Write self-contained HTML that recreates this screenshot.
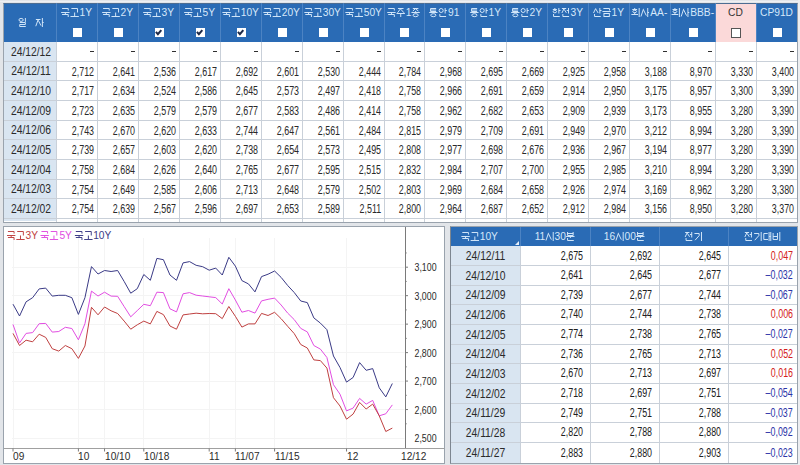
<!DOCTYPE html><html><head><meta charset="utf-8"><style>
*{margin:0;padding:0;box-sizing:border-box}
html,body{width:800px;height:465px;overflow:hidden;background:#e2e5e9;font-family:"Liberation Sans",sans-serif;}
.a{position:absolute}
.t{position:absolute;white-space:nowrap;font-size:10px;line-height:12px;color:#2a2a2a}
.d{font-size:12px;transform:scaleX(0.86);transform-origin:50% 50%}
.n{font-size:12px;transform:scaleX(0.74);transform-origin:100% 50%}
.h{position:absolute;white-space:nowrap;font-size:11px;line-height:12px;color:#d6e8fa;text-align:center;transform:scaleX(0.93);transform-origin:50% 50%}
.cb{position:absolute;width:9px;height:9px;background:#fff}

</style></head><body>
<div class="a" style="left:0;top:1px;width:800px;height:1px;background:#eef0f3"></div>
<div class="a" style="left:3px;top:3px;width:795px;height:220px;background:#fff;border:1px solid #9aa3ad;border-top-color:#4d6d92"></div>
<div class="a" style="left:4px;top:4px;width:793px;height:37.5px;background:#2a6bb5"></div>
<div class="a" style="left:715px;top:4px;width:41px;height:37.5px;background:#fbd9d9"></div>
<div class="a" style="left:4px;top:41.5px;width:52px;height:179.8px;background:#d9e5f1"></div>
<div class="a" style="left:56px;top:3px;width:1px;height:38.5px;background:#4c83c3"></div>
<div class="a" style="left:97px;top:3px;width:1px;height:38.5px;background:#4c83c3"></div>
<div class="a" style="left:138px;top:3px;width:1px;height:38.5px;background:#4c83c3"></div>
<div class="a" style="left:179px;top:3px;width:1px;height:38.5px;background:#4c83c3"></div>
<div class="a" style="left:220px;top:3px;width:1px;height:38.5px;background:#4c83c3"></div>
<div class="a" style="left:261px;top:3px;width:1px;height:38.5px;background:#4c83c3"></div>
<div class="a" style="left:302px;top:3px;width:1px;height:38.5px;background:#4c83c3"></div>
<div class="a" style="left:343px;top:3px;width:1px;height:38.5px;background:#4c83c3"></div>
<div class="a" style="left:384px;top:3px;width:1px;height:38.5px;background:#4c83c3"></div>
<div class="a" style="left:424px;top:3px;width:1px;height:38.5px;background:#4c83c3"></div>
<div class="a" style="left:465px;top:3px;width:1px;height:38.5px;background:#4c83c3"></div>
<div class="a" style="left:506px;top:3px;width:1px;height:38.5px;background:#4c83c3"></div>
<div class="a" style="left:547px;top:3px;width:1px;height:38.5px;background:#4c83c3"></div>
<div class="a" style="left:588px;top:3px;width:1px;height:38.5px;background:#4c83c3"></div>
<div class="a" style="left:629px;top:3px;width:1px;height:38.5px;background:#4c83c3"></div>
<div class="a" style="left:670px;top:3px;width:1px;height:38.5px;background:#4c83c3"></div>
<div class="a" style="left:715px;top:3px;width:1px;height:38.5px;background:#4c83c3"></div>
<div class="a" style="left:756px;top:3px;width:1px;height:38.5px;background:#4c83c3"></div>
<div class="a" style="left:56px;top:41.5px;width:1px;height:180.8px;background:#c9d0d9"></div>
<div class="a" style="left:97px;top:41.5px;width:1px;height:180.8px;background:#c9d0d9"></div>
<div class="a" style="left:138px;top:41.5px;width:1px;height:180.8px;background:#c9d0d9"></div>
<div class="a" style="left:179px;top:41.5px;width:1px;height:180.8px;background:#c9d0d9"></div>
<div class="a" style="left:220px;top:41.5px;width:1px;height:180.8px;background:#c9d0d9"></div>
<div class="a" style="left:261px;top:41.5px;width:1px;height:180.8px;background:#c9d0d9"></div>
<div class="a" style="left:302px;top:41.5px;width:1px;height:180.8px;background:#c9d0d9"></div>
<div class="a" style="left:343px;top:41.5px;width:1px;height:180.8px;background:#c9d0d9"></div>
<div class="a" style="left:384px;top:41.5px;width:1px;height:180.8px;background:#c9d0d9"></div>
<div class="a" style="left:424px;top:41.5px;width:1px;height:180.8px;background:#c9d0d9"></div>
<div class="a" style="left:465px;top:41.5px;width:1px;height:180.8px;background:#c9d0d9"></div>
<div class="a" style="left:506px;top:41.5px;width:1px;height:180.8px;background:#c9d0d9"></div>
<div class="a" style="left:547px;top:41.5px;width:1px;height:180.8px;background:#c9d0d9"></div>
<div class="a" style="left:588px;top:41.5px;width:1px;height:180.8px;background:#c9d0d9"></div>
<div class="a" style="left:629px;top:41.5px;width:1px;height:180.8px;background:#c9d0d9"></div>
<div class="a" style="left:670px;top:41.5px;width:1px;height:180.8px;background:#c9d0d9"></div>
<div class="a" style="left:715px;top:41.5px;width:1px;height:180.8px;background:#c9d0d9"></div>
<div class="a" style="left:756px;top:41.5px;width:1px;height:180.8px;background:#c9d0d9"></div>
<div class="a" style="left:4px;top:61px;width:793px;height:1px;background:#c9d0d9"></div>
<div class="a" style="left:4px;top:80px;width:793px;height:1px;background:#c9d0d9"></div>
<div class="a" style="left:4px;top:100px;width:793px;height:1px;background:#c9d0d9"></div>
<div class="a" style="left:4px;top:120px;width:793px;height:1px;background:#c9d0d9"></div>
<div class="a" style="left:4px;top:139px;width:793px;height:1px;background:#c9d0d9"></div>
<div class="a" style="left:4px;top:159px;width:793px;height:1px;background:#c9d0d9"></div>
<div class="a" style="left:4px;top:179px;width:793px;height:1px;background:#c9d0d9"></div>
<div class="a" style="left:4px;top:198px;width:793px;height:1px;background:#c9d0d9"></div>
<div class="a" style="left:4px;top:218px;width:793px;height:1px;background:#c9d0d9"></div>
<div class="a" style="left:3px;top:222px;width:795px;height:1px;background:#9aa3ad"></div>
<div class="h" style="left:15px;top:17px;width:15px;font-size:10px"><svg width="10" height="9" viewBox="0 0 10 9" style="display:inline-block;vertical-align:-1px;overflow:visible"><g fill="none" stroke="currentColor" stroke-width="1.0"><ellipse cx="3" cy="1.9" rx="2.3" ry="1.5"/><path d="M7.6 0V3.9M1.5 4.5H7.6V6.5H1.5V8.5H8"/></g></svg></div>
<div class="h" style="left:31.5px;top:17px;width:15px;font-size:10px"><svg width="10" height="9" viewBox="0 0 10 9" style="display:inline-block;vertical-align:-1px;overflow:visible"><g fill="none" stroke="currentColor" stroke-width="1.0"><path d="M0.6 1.5H5.6M3.1 1.5L0.5 8.2M3.1 2.2L6.1 7.6M7.6 0V9M7.6 4.5H9"/></g></svg></div>
<div class="h" style="left:56px;top:6px;width:41px;color:#d6e8fa"><svg width="10" height="9" viewBox="0 0 10 9" style="display:inline-block;vertical-align:-1px;overflow:visible"><g fill="none" stroke="currentColor" stroke-width="1.0"><path d="M1 0.5H7.6V2.6M0 4.5H9M4.5 4.5V6M1 6.5H7.6V9"/></g></svg><svg width="10" height="9" viewBox="0 0 10 9" style="display:inline-block;vertical-align:-1px;overflow:visible"><g fill="none" stroke="currentColor" stroke-width="1.0"><path d="M1 0.5H7.6V4.5M4.5 4.5V8M0 8.5H9"/></g></svg>1Y</div>
<div class="cb" style="left:72.5px;top:28px"></div>
<div class="h" style="left:97px;top:6px;width:41px;color:#d6e8fa"><svg width="10" height="9" viewBox="0 0 10 9" style="display:inline-block;vertical-align:-1px;overflow:visible"><g fill="none" stroke="currentColor" stroke-width="1.0"><path d="M1 0.5H7.6V2.6M0 4.5H9M4.5 4.5V6M1 6.5H7.6V9"/></g></svg><svg width="10" height="9" viewBox="0 0 10 9" style="display:inline-block;vertical-align:-1px;overflow:visible"><g fill="none" stroke="currentColor" stroke-width="1.0"><path d="M1 0.5H7.6V4.5M4.5 4.5V8M0 8.5H9"/></g></svg>2Y</div>
<div class="cb" style="left:113.5px;top:28px"></div>
<div class="h" style="left:138px;top:6px;width:41px;color:#d6e8fa"><svg width="10" height="9" viewBox="0 0 10 9" style="display:inline-block;vertical-align:-1px;overflow:visible"><g fill="none" stroke="currentColor" stroke-width="1.0"><path d="M1 0.5H7.6V2.6M0 4.5H9M4.5 4.5V6M1 6.5H7.6V9"/></g></svg><svg width="10" height="9" viewBox="0 0 10 9" style="display:inline-block;vertical-align:-1px;overflow:visible"><g fill="none" stroke="currentColor" stroke-width="1.0"><path d="M1 0.5H7.6V4.5M4.5 4.5V8M0 8.5H9"/></g></svg>3Y</div>
<div class="cb" style="left:154.5px;top:28px"></div>
<svg class="a" style="left:154.0px;top:28px" width="10" height="10"><path d="M1.9 3.9 L3.9 6.2 L7.3 2.1" stroke="#1e2a48" stroke-width="2" fill="none"/></svg>
<div class="h" style="left:179px;top:6px;width:41px;color:#d6e8fa"><svg width="10" height="9" viewBox="0 0 10 9" style="display:inline-block;vertical-align:-1px;overflow:visible"><g fill="none" stroke="currentColor" stroke-width="1.0"><path d="M1 0.5H7.6V2.6M0 4.5H9M4.5 4.5V6M1 6.5H7.6V9"/></g></svg><svg width="10" height="9" viewBox="0 0 10 9" style="display:inline-block;vertical-align:-1px;overflow:visible"><g fill="none" stroke="currentColor" stroke-width="1.0"><path d="M1 0.5H7.6V4.5M4.5 4.5V8M0 8.5H9"/></g></svg>5Y</div>
<div class="cb" style="left:195.5px;top:28px"></div>
<svg class="a" style="left:195.0px;top:28px" width="10" height="10"><path d="M1.9 3.9 L3.9 6.2 L7.3 2.1" stroke="#1e2a48" stroke-width="2" fill="none"/></svg>
<div class="h" style="left:220px;top:6px;width:41px;color:#d6e8fa"><svg width="10" height="9" viewBox="0 0 10 9" style="display:inline-block;vertical-align:-1px;overflow:visible"><g fill="none" stroke="currentColor" stroke-width="1.0"><path d="M1 0.5H7.6V2.6M0 4.5H9M4.5 4.5V6M1 6.5H7.6V9"/></g></svg><svg width="10" height="9" viewBox="0 0 10 9" style="display:inline-block;vertical-align:-1px;overflow:visible"><g fill="none" stroke="currentColor" stroke-width="1.0"><path d="M1 0.5H7.6V4.5M4.5 4.5V8M0 8.5H9"/></g></svg>10Y</div>
<div class="cb" style="left:236.5px;top:28px"></div>
<svg class="a" style="left:236.0px;top:28px" width="10" height="10"><path d="M1.9 3.9 L3.9 6.2 L7.3 2.1" stroke="#1e2a48" stroke-width="2" fill="none"/></svg>
<div class="h" style="left:261px;top:6px;width:41px;color:#d6e8fa"><svg width="10" height="9" viewBox="0 0 10 9" style="display:inline-block;vertical-align:-1px;overflow:visible"><g fill="none" stroke="currentColor" stroke-width="1.0"><path d="M1 0.5H7.6V2.6M0 4.5H9M4.5 4.5V6M1 6.5H7.6V9"/></g></svg><svg width="10" height="9" viewBox="0 0 10 9" style="display:inline-block;vertical-align:-1px;overflow:visible"><g fill="none" stroke="currentColor" stroke-width="1.0"><path d="M1 0.5H7.6V4.5M4.5 4.5V8M0 8.5H9"/></g></svg>20Y</div>
<div class="cb" style="left:277.5px;top:28px"></div>
<div class="h" style="left:302px;top:6px;width:41px;color:#d6e8fa"><svg width="10" height="9" viewBox="0 0 10 9" style="display:inline-block;vertical-align:-1px;overflow:visible"><g fill="none" stroke="currentColor" stroke-width="1.0"><path d="M1 0.5H7.6V2.6M0 4.5H9M4.5 4.5V6M1 6.5H7.6V9"/></g></svg><svg width="10" height="9" viewBox="0 0 10 9" style="display:inline-block;vertical-align:-1px;overflow:visible"><g fill="none" stroke="currentColor" stroke-width="1.0"><path d="M1 0.5H7.6V4.5M4.5 4.5V8M0 8.5H9"/></g></svg>30Y</div>
<div class="cb" style="left:318.5px;top:28px"></div>
<div class="h" style="left:343px;top:6px;width:41px;color:#d6e8fa"><svg width="10" height="9" viewBox="0 0 10 9" style="display:inline-block;vertical-align:-1px;overflow:visible"><g fill="none" stroke="currentColor" stroke-width="1.0"><path d="M1 0.5H7.6V2.6M0 4.5H9M4.5 4.5V6M1 6.5H7.6V9"/></g></svg><svg width="10" height="9" viewBox="0 0 10 9" style="display:inline-block;vertical-align:-1px;overflow:visible"><g fill="none" stroke="currentColor" stroke-width="1.0"><path d="M1 0.5H7.6V4.5M4.5 4.5V8M0 8.5H9"/></g></svg>50Y</div>
<div class="cb" style="left:359.5px;top:28px"></div>
<div class="h" style="left:384px;top:6px;width:40px;color:#d6e8fa"><svg width="10" height="9" viewBox="0 0 10 9" style="display:inline-block;vertical-align:-1px;overflow:visible"><g fill="none" stroke="currentColor" stroke-width="1.0"><path d="M1 0.5H7.6V2.6M0 4.5H9M4.5 4.5V6M1 6.5H7.6V9"/></g></svg><svg width="10" height="9" viewBox="0 0 10 9" style="display:inline-block;vertical-align:-1px;overflow:visible"><g fill="none" stroke="currentColor" stroke-width="1.0"><path d="M1.5 0.5H7.5M4.5 0.5L1 4.8M4.5 1.2L8 4.8M0 5.5H9M4.5 5.5V9"/></g></svg>1<svg width="10" height="9" viewBox="0 0 10 9" style="display:inline-block;vertical-align:-1px;overflow:visible"><g fill="none" stroke="currentColor" stroke-width="1.0"><path d="M1.5 0.5H7.5M4.5 0.5L1.5 3M4.5 1L7.5 3M4.5 3V4.5M0 4.5H9"/><ellipse cx="4.5" cy="7.2" rx="2.8" ry="1.5"/></g></svg></div>
<div class="cb" style="left:400.0px;top:28px"></div>
<div class="h" style="left:424px;top:6px;width:41px;color:#d6e8fa"><svg width="10" height="9" viewBox="0 0 10 9" style="display:inline-block;vertical-align:-1px;overflow:visible"><g fill="none" stroke="currentColor" stroke-width="1.0"><path d="M7.5 0.5H1.5V3.5H7.5M1.5 2H7.5M4.5 3.5V4.5M0 4.5H9"/><ellipse cx="4.5" cy="7.2" rx="2.8" ry="1.5"/></g></svg><svg width="10" height="9" viewBox="0 0 10 9" style="display:inline-block;vertical-align:-1px;overflow:visible"><g fill="none" stroke="currentColor" stroke-width="1.0"><ellipse cx="2.9" cy="2.5" rx="2.2" ry="2"/><path d="M7.2 0V5.5M7.2 2.5H9M1.5 6V8.5H8.2"/></g></svg>91</div>
<div class="cb" style="left:440.5px;top:28px"></div>
<div class="h" style="left:465px;top:6px;width:41px;color:#d6e8fa"><svg width="10" height="9" viewBox="0 0 10 9" style="display:inline-block;vertical-align:-1px;overflow:visible"><g fill="none" stroke="currentColor" stroke-width="1.0"><path d="M7.5 0.5H1.5V3.5H7.5M1.5 2H7.5M4.5 3.5V4.5M0 4.5H9"/><ellipse cx="4.5" cy="7.2" rx="2.8" ry="1.5"/></g></svg><svg width="10" height="9" viewBox="0 0 10 9" style="display:inline-block;vertical-align:-1px;overflow:visible"><g fill="none" stroke="currentColor" stroke-width="1.0"><ellipse cx="2.9" cy="2.5" rx="2.2" ry="2"/><path d="M7.2 0V5.5M7.2 2.5H9M1.5 6V8.5H8.2"/></g></svg>1Y</div>
<div class="cb" style="left:481.5px;top:28px"></div>
<div class="h" style="left:506px;top:6px;width:41px;color:#d6e8fa"><svg width="10" height="9" viewBox="0 0 10 9" style="display:inline-block;vertical-align:-1px;overflow:visible"><g fill="none" stroke="currentColor" stroke-width="1.0"><path d="M7.5 0.5H1.5V3.5H7.5M1.5 2H7.5M4.5 3.5V4.5M0 4.5H9"/><ellipse cx="4.5" cy="7.2" rx="2.8" ry="1.5"/></g></svg><svg width="10" height="9" viewBox="0 0 10 9" style="display:inline-block;vertical-align:-1px;overflow:visible"><g fill="none" stroke="currentColor" stroke-width="1.0"><ellipse cx="2.9" cy="2.5" rx="2.2" ry="2"/><path d="M7.2 0V5.5M7.2 2.5H9M1.5 6V8.5H8.2"/></g></svg>2Y</div>
<div class="cb" style="left:522.5px;top:28px"></div>
<div class="h" style="left:547px;top:6px;width:41px;color:#d6e8fa"><svg width="10" height="9" viewBox="0 0 10 9" style="display:inline-block;vertical-align:-1px;overflow:visible"><g fill="none" stroke="currentColor" stroke-width="1.0"><path d="M2.9 0V1M0.7 1.5H5.1"/><ellipse cx="2.9" cy="3.6" rx="1.8" ry="1.2"/><path d="M7.2 0V5.5M7.2 2.5H9M1.5 6V8.5H8.2"/></g></svg><svg width="10" height="9" viewBox="0 0 10 9" style="display:inline-block;vertical-align:-1px;overflow:visible"><g fill="none" stroke="currentColor" stroke-width="1.0"><path d="M0.5 0.5H5.1M2.8 0.5L0.5 5M2.8 1.2L5.3 4.8M7.6 0V5.5M5.7 2.5H7.6M1.5 6V8.5H8.2"/></g></svg>3Y</div>
<div class="cb" style="left:563.5px;top:28px"></div>
<div class="h" style="left:588px;top:6px;width:41px;color:#d6e8fa"><svg width="10" height="9" viewBox="0 0 10 9" style="display:inline-block;vertical-align:-1px;overflow:visible"><g fill="none" stroke="currentColor" stroke-width="1.0"><path d="M2.8 0.3L0.4 5M2.8 1L5.4 5M7.2 0V5.5M7.2 2.5H9M1.5 6V8.5H8.2"/></g></svg><svg width="10" height="9" viewBox="0 0 10 9" style="display:inline-block;vertical-align:-1px;overflow:visible"><g fill="none" stroke="currentColor" stroke-width="1.0"><path d="M1 0.5H7.6V2.5M0 3.5H9"/><rect x="1.6" y="5.5" width="5.8" height="3"/></g></svg>1Y</div>
<div class="cb" style="left:604.5px;top:28px"></div>
<div class="h" style="left:629px;top:6px;width:41px;color:#d6e8fa"><svg width="10" height="9" viewBox="0 0 10 9" style="display:inline-block;vertical-align:-1px;overflow:visible"><g fill="none" stroke="currentColor" stroke-width="1.0"><path d="M3.6 0V1M1 1.5H6.2"/><ellipse cx="3.6" cy="3.5" rx="2" ry="1.2"/><path d="M3.6 4.7V6.5M0 6.5H7.2M8.4 0V9"/></g></svg><svg width="10" height="9" viewBox="0 0 10 9" style="display:inline-block;vertical-align:-1px;overflow:visible"><g fill="none" stroke="currentColor" stroke-width="1.0"><path d="M3.1 0.8L0.3 8.5M3.1 2L6.1 7.6M7.6 0V9M7.6 4.5H9"/></g></svg>AA-</div>
<div class="cb" style="left:645.5px;top:28px"></div>
<div class="h" style="left:670px;top:6px;width:45px;color:#d6e8fa"><svg width="10" height="9" viewBox="0 0 10 9" style="display:inline-block;vertical-align:-1px;overflow:visible"><g fill="none" stroke="currentColor" stroke-width="1.0"><path d="M3.6 0V1M1 1.5H6.2"/><ellipse cx="3.6" cy="3.5" rx="2" ry="1.2"/><path d="M3.6 4.7V6.5M0 6.5H7.2M8.4 0V9"/></g></svg><svg width="10" height="9" viewBox="0 0 10 9" style="display:inline-block;vertical-align:-1px;overflow:visible"><g fill="none" stroke="currentColor" stroke-width="1.0"><path d="M3.1 0.8L0.3 8.5M3.1 2L6.1 7.6M7.6 0V9M7.6 4.5H9"/></g></svg>BBB-</div>
<div class="cb" style="left:688.5px;top:28px"></div>
<div class="h" style="left:715px;top:6px;width:41px;color:#333">CD</div>
<div class="cb" style="left:731.0px;top:28px;width:10px;height:10px;border:1px solid #555"></div>
<div class="h" style="left:756px;top:6px;width:41px;color:#d6e8fa">CP91D</div>
<div class="cb" style="left:772.5px;top:28px"></div>
<div class="t d" style="left:5px;top:45.75px;width:52px;text-align:center">24/12/12</div>
<div class="a" style="left:90px;top:51px;width:4px;height:1.4px;background:#303030"></div>
<div class="a" style="left:131px;top:51px;width:4px;height:1.4px;background:#303030"></div>
<div class="a" style="left:172px;top:51px;width:4px;height:1.4px;background:#303030"></div>
<div class="a" style="left:213px;top:51px;width:4px;height:1.4px;background:#303030"></div>
<div class="a" style="left:254px;top:51px;width:4px;height:1.4px;background:#303030"></div>
<div class="a" style="left:295px;top:51px;width:4px;height:1.4px;background:#303030"></div>
<div class="a" style="left:336px;top:51px;width:4px;height:1.4px;background:#303030"></div>
<div class="a" style="left:377px;top:51px;width:4px;height:1.4px;background:#303030"></div>
<div class="a" style="left:417px;top:51px;width:4px;height:1.4px;background:#303030"></div>
<div class="a" style="left:458px;top:51px;width:4px;height:1.4px;background:#303030"></div>
<div class="a" style="left:499px;top:51px;width:4px;height:1.4px;background:#303030"></div>
<div class="a" style="left:540px;top:51px;width:4px;height:1.4px;background:#303030"></div>
<div class="a" style="left:581px;top:51px;width:4px;height:1.4px;background:#303030"></div>
<div class="a" style="left:622px;top:51px;width:4px;height:1.4px;background:#303030"></div>
<div class="a" style="left:663px;top:51px;width:4px;height:1.4px;background:#303030"></div>
<div class="a" style="left:708px;top:51px;width:4px;height:1.4px;background:#303030"></div>
<div class="a" style="left:749px;top:51px;width:4px;height:1.4px;background:#303030"></div>
<div class="a" style="left:790px;top:51px;width:4px;height:1.4px;background:#303030"></div>
<div class="t d" style="left:5px;top:65.0px;width:52px;text-align:center">24/12/11</div>
<div class="t n" style="right:706px;top:65.5px">2,712</div>
<div class="t n" style="right:665px;top:65.5px">2,641</div>
<div class="t n" style="right:624px;top:65.5px">2,536</div>
<div class="t n" style="right:583px;top:65.5px">2,617</div>
<div class="t n" style="right:542px;top:65.5px">2,692</div>
<div class="t n" style="right:501px;top:65.5px">2,601</div>
<div class="t n" style="right:460px;top:65.5px">2,530</div>
<div class="t n" style="right:419px;top:65.5px">2,444</div>
<div class="t n" style="right:379px;top:65.5px">2,784</div>
<div class="t n" style="right:338px;top:65.5px">2,968</div>
<div class="t n" style="right:297px;top:65.5px">2,695</div>
<div class="t n" style="right:256px;top:65.5px">2,669</div>
<div class="t n" style="right:215px;top:65.5px">2,925</div>
<div class="t n" style="right:174px;top:65.5px">2,958</div>
<div class="t n" style="right:133px;top:65.5px">3,188</div>
<div class="t n" style="right:88px;top:65.5px">8,970</div>
<div class="t n" style="right:47px;top:65.5px">3,330</div>
<div class="t n" style="right:6px;top:65.5px">3,400</div>
<div class="t d" style="left:5px;top:84.5px;width:52px;text-align:center">24/12/10</div>
<div class="t n" style="right:706px;top:85.0px">2,717</div>
<div class="t n" style="right:665px;top:85.0px">2,634</div>
<div class="t n" style="right:624px;top:85.0px">2,524</div>
<div class="t n" style="right:583px;top:85.0px">2,586</div>
<div class="t n" style="right:542px;top:85.0px">2,645</div>
<div class="t n" style="right:501px;top:85.0px">2,573</div>
<div class="t n" style="right:460px;top:85.0px">2,497</div>
<div class="t n" style="right:419px;top:85.0px">2,418</div>
<div class="t n" style="right:379px;top:85.0px">2,758</div>
<div class="t n" style="right:338px;top:85.0px">2,966</div>
<div class="t n" style="right:297px;top:85.0px">2,691</div>
<div class="t n" style="right:256px;top:85.0px">2,659</div>
<div class="t n" style="right:215px;top:85.0px">2,914</div>
<div class="t n" style="right:174px;top:85.0px">2,950</div>
<div class="t n" style="right:133px;top:85.0px">3,175</div>
<div class="t n" style="right:88px;top:85.0px">8,957</div>
<div class="t n" style="right:47px;top:85.0px">3,300</div>
<div class="t n" style="right:6px;top:85.0px">3,390</div>
<div class="t d" style="left:5px;top:104.5px;width:52px;text-align:center">24/12/09</div>
<div class="t n" style="right:706px;top:105.0px">2,723</div>
<div class="t n" style="right:665px;top:105.0px">2,635</div>
<div class="t n" style="right:624px;top:105.0px">2,579</div>
<div class="t n" style="right:583px;top:105.0px">2,579</div>
<div class="t n" style="right:542px;top:105.0px">2,677</div>
<div class="t n" style="right:501px;top:105.0px">2,583</div>
<div class="t n" style="right:460px;top:105.0px">2,486</div>
<div class="t n" style="right:419px;top:105.0px">2,414</div>
<div class="t n" style="right:379px;top:105.0px">2,758</div>
<div class="t n" style="right:338px;top:105.0px">2,962</div>
<div class="t n" style="right:297px;top:105.0px">2,682</div>
<div class="t n" style="right:256px;top:105.0px">2,653</div>
<div class="t n" style="right:215px;top:105.0px">2,909</div>
<div class="t n" style="right:174px;top:105.0px">2,939</div>
<div class="t n" style="right:133px;top:105.0px">3,173</div>
<div class="t n" style="right:88px;top:105.0px">8,955</div>
<div class="t n" style="right:47px;top:105.0px">3,280</div>
<div class="t n" style="right:6px;top:105.0px">3,390</div>
<div class="t d" style="left:5px;top:124.0px;width:52px;text-align:center">24/12/06</div>
<div class="t n" style="right:706px;top:124.5px">2,743</div>
<div class="t n" style="right:665px;top:124.5px">2,670</div>
<div class="t n" style="right:624px;top:124.5px">2,620</div>
<div class="t n" style="right:583px;top:124.5px">2,633</div>
<div class="t n" style="right:542px;top:124.5px">2,744</div>
<div class="t n" style="right:501px;top:124.5px">2,647</div>
<div class="t n" style="right:460px;top:124.5px">2,561</div>
<div class="t n" style="right:419px;top:124.5px">2,484</div>
<div class="t n" style="right:379px;top:124.5px">2,815</div>
<div class="t n" style="right:338px;top:124.5px">2,979</div>
<div class="t n" style="right:297px;top:124.5px">2,709</div>
<div class="t n" style="right:256px;top:124.5px">2,691</div>
<div class="t n" style="right:215px;top:124.5px">2,949</div>
<div class="t n" style="right:174px;top:124.5px">2,970</div>
<div class="t n" style="right:133px;top:124.5px">3,212</div>
<div class="t n" style="right:88px;top:124.5px">8,994</div>
<div class="t n" style="right:47px;top:124.5px">3,280</div>
<div class="t n" style="right:6px;top:124.5px">3,390</div>
<div class="t d" style="left:5px;top:143.5px;width:52px;text-align:center">24/12/05</div>
<div class="t n" style="right:706px;top:144.0px">2,739</div>
<div class="t n" style="right:665px;top:144.0px">2,657</div>
<div class="t n" style="right:624px;top:144.0px">2,603</div>
<div class="t n" style="right:583px;top:144.0px">2,620</div>
<div class="t n" style="right:542px;top:144.0px">2,738</div>
<div class="t n" style="right:501px;top:144.0px">2,654</div>
<div class="t n" style="right:460px;top:144.0px">2,573</div>
<div class="t n" style="right:419px;top:144.0px">2,495</div>
<div class="t n" style="right:379px;top:144.0px">2,808</div>
<div class="t n" style="right:338px;top:144.0px">2,977</div>
<div class="t n" style="right:297px;top:144.0px">2,698</div>
<div class="t n" style="right:256px;top:144.0px">2,676</div>
<div class="t n" style="right:215px;top:144.0px">2,936</div>
<div class="t n" style="right:174px;top:144.0px">2,967</div>
<div class="t n" style="right:133px;top:144.0px">3,194</div>
<div class="t n" style="right:88px;top:144.0px">8,977</div>
<div class="t n" style="right:47px;top:144.0px">3,280</div>
<div class="t n" style="right:6px;top:144.0px">3,390</div>
<div class="t d" style="left:5px;top:163.5px;width:52px;text-align:center">24/12/04</div>
<div class="t n" style="right:706px;top:164.0px">2,758</div>
<div class="t n" style="right:665px;top:164.0px">2,684</div>
<div class="t n" style="right:624px;top:164.0px">2,626</div>
<div class="t n" style="right:583px;top:164.0px">2,640</div>
<div class="t n" style="right:542px;top:164.0px">2,765</div>
<div class="t n" style="right:501px;top:164.0px">2,677</div>
<div class="t n" style="right:460px;top:164.0px">2,595</div>
<div class="t n" style="right:419px;top:164.0px">2,515</div>
<div class="t n" style="right:379px;top:164.0px">2,832</div>
<div class="t n" style="right:338px;top:164.0px">2,984</div>
<div class="t n" style="right:297px;top:164.0px">2,707</div>
<div class="t n" style="right:256px;top:164.0px">2,700</div>
<div class="t n" style="right:215px;top:164.0px">2,955</div>
<div class="t n" style="right:174px;top:164.0px">2,985</div>
<div class="t n" style="right:133px;top:164.0px">3,210</div>
<div class="t n" style="right:88px;top:164.0px">8,994</div>
<div class="t n" style="right:47px;top:164.0px">3,280</div>
<div class="t n" style="right:6px;top:164.0px">3,390</div>
<div class="t d" style="left:5px;top:183.0px;width:52px;text-align:center">24/12/03</div>
<div class="t n" style="right:706px;top:183.5px">2,754</div>
<div class="t n" style="right:665px;top:183.5px">2,649</div>
<div class="t n" style="right:624px;top:183.5px">2,585</div>
<div class="t n" style="right:583px;top:183.5px">2,606</div>
<div class="t n" style="right:542px;top:183.5px">2,713</div>
<div class="t n" style="right:501px;top:183.5px">2,648</div>
<div class="t n" style="right:460px;top:183.5px">2,579</div>
<div class="t n" style="right:419px;top:183.5px">2,502</div>
<div class="t n" style="right:379px;top:183.5px">2,803</div>
<div class="t n" style="right:338px;top:183.5px">2,969</div>
<div class="t n" style="right:297px;top:183.5px">2,684</div>
<div class="t n" style="right:256px;top:183.5px">2,658</div>
<div class="t n" style="right:215px;top:183.5px">2,926</div>
<div class="t n" style="right:174px;top:183.5px">2,974</div>
<div class="t n" style="right:133px;top:183.5px">3,169</div>
<div class="t n" style="right:88px;top:183.5px">8,962</div>
<div class="t n" style="right:47px;top:183.5px">3,280</div>
<div class="t n" style="right:6px;top:183.5px">3,380</div>
<div class="t d" style="left:5px;top:202.5px;width:52px;text-align:center">24/12/02</div>
<div class="t n" style="right:706px;top:203.0px">2,754</div>
<div class="t n" style="right:665px;top:203.0px">2,639</div>
<div class="t n" style="right:624px;top:203.0px">2,567</div>
<div class="t n" style="right:583px;top:203.0px">2,596</div>
<div class="t n" style="right:542px;top:203.0px">2,697</div>
<div class="t n" style="right:501px;top:203.0px">2,653</div>
<div class="t n" style="right:460px;top:203.0px">2,589</div>
<div class="t n" style="right:419px;top:203.0px">2,511</div>
<div class="t n" style="right:379px;top:203.0px">2,800</div>
<div class="t n" style="right:338px;top:203.0px">2,964</div>
<div class="t n" style="right:297px;top:203.0px">2,687</div>
<div class="t n" style="right:256px;top:203.0px">2,652</div>
<div class="t n" style="right:215px;top:203.0px">2,912</div>
<div class="t n" style="right:174px;top:203.0px">2,984</div>
<div class="t n" style="right:133px;top:203.0px">3,156</div>
<div class="t n" style="right:88px;top:203.0px">8,950</div>
<div class="t n" style="right:47px;top:203.0px">3,280</div>
<div class="t n" style="right:6px;top:203.0px">3,370</div>
<div class="a" style="left:3px;top:226px;width:442px;height:238px;background:#fff;border:1px solid #9aa3ad"></div>
<svg class="a" style="left:0;top:0" width="800" height="465" viewBox="0 0 800 465"><line x1="12" y1="267.5" x2="404.5" y2="267.5" stroke="#f4f4f4" stroke-width="1"/><line x1="12" y1="295.5" x2="404.5" y2="295.5" stroke="#f4f4f4" stroke-width="1"/><line x1="12" y1="324.5" x2="404.5" y2="324.5" stroke="#f4f4f4" stroke-width="1"/><line x1="12" y1="352.5" x2="404.5" y2="352.5" stroke="#f4f4f4" stroke-width="1"/><line x1="12" y1="381.5" x2="404.5" y2="381.5" stroke="#f4f4f4" stroke-width="1"/><line x1="12" y1="409.5" x2="404.5" y2="409.5" stroke="#f4f4f4" stroke-width="1"/><line x1="12" y1="438.5" x2="404.5" y2="438.5" stroke="#f4f4f4" stroke-width="1"/><line x1="13.5" y1="238" x2="13.5" y2="448.5" stroke="#f4f4f4" stroke-width="1"/><line x1="78.5" y1="238" x2="78.5" y2="448.5" stroke="#f4f4f4" stroke-width="1"/><line x1="104.5" y1="238" x2="104.5" y2="448.5" stroke="#f4f4f4" stroke-width="1"/><line x1="143.5" y1="238" x2="143.5" y2="448.5" stroke="#f4f4f4" stroke-width="1"/><line x1="209.5" y1="238" x2="209.5" y2="448.5" stroke="#f4f4f4" stroke-width="1"/><line x1="235.5" y1="238" x2="235.5" y2="448.5" stroke="#f4f4f4" stroke-width="1"/><line x1="274.5" y1="238" x2="274.5" y2="448.5" stroke="#f4f4f4" stroke-width="1"/><line x1="346.5" y1="238" x2="346.5" y2="448.5" stroke="#f4f4f4" stroke-width="1"/><line x1="405.5" y1="227" x2="405.5" y2="448.5" stroke="#7a7a7a" stroke-width="1"/><line x1="4" y1="448.5" x2="444.5" y2="448.5" stroke="#a0a0a0" stroke-width="1"/><line x1="405.5" y1="252.96499999999997" x2="406.7" y2="252.96499999999997" stroke="#7a7a7a" stroke-width="1"/><line x1="405.5" y1="267.2" x2="408.0" y2="267.2" stroke="#7a7a7a" stroke-width="1"/><line x1="405.5" y1="281.435" x2="406.7" y2="281.435" stroke="#7a7a7a" stroke-width="1"/><line x1="405.5" y1="295.67" x2="408.0" y2="295.67" stroke="#7a7a7a" stroke-width="1"/><line x1="405.5" y1="309.905" x2="406.7" y2="309.905" stroke="#7a7a7a" stroke-width="1"/><line x1="405.5" y1="324.14" x2="408.0" y2="324.14" stroke="#7a7a7a" stroke-width="1"/><line x1="405.5" y1="338.375" x2="406.7" y2="338.375" stroke="#7a7a7a" stroke-width="1"/><line x1="405.5" y1="352.61" x2="408.0" y2="352.61" stroke="#7a7a7a" stroke-width="1"/><line x1="405.5" y1="366.84499999999997" x2="406.7" y2="366.84499999999997" stroke="#7a7a7a" stroke-width="1"/><line x1="405.5" y1="381.08" x2="408.0" y2="381.08" stroke="#7a7a7a" stroke-width="1"/><line x1="405.5" y1="395.315" x2="406.7" y2="395.315" stroke="#7a7a7a" stroke-width="1"/><line x1="405.5" y1="409.54999999999995" x2="408.0" y2="409.54999999999995" stroke="#7a7a7a" stroke-width="1"/><line x1="405.5" y1="423.78499999999997" x2="406.7" y2="423.78499999999997" stroke="#7a7a7a" stroke-width="1"/><line x1="13.0" y1="448.5" x2="13.0" y2="451.5" stroke="#7a7a7a" stroke-width="1"/><line x1="78.4" y1="448.5" x2="78.4" y2="451.5" stroke="#7a7a7a" stroke-width="1"/><line x1="104.56" y1="448.5" x2="104.56" y2="451.5" stroke="#7a7a7a" stroke-width="1"/><line x1="143.8" y1="448.5" x2="143.8" y2="451.5" stroke="#7a7a7a" stroke-width="1"/><line x1="209.2" y1="448.5" x2="209.2" y2="451.5" stroke="#7a7a7a" stroke-width="1"/><line x1="235.36" y1="448.5" x2="235.36" y2="451.5" stroke="#7a7a7a" stroke-width="1"/><line x1="274.6" y1="448.5" x2="274.6" y2="451.5" stroke="#7a7a7a" stroke-width="1"/><line x1="346.54" y1="448.5" x2="346.54" y2="451.5" stroke="#7a7a7a" stroke-width="1"/><polyline points="13.00,304.20 19.54,316.00 26.08,301.80 32.62,297.70 39.16,288.90 45.70,288.10 52.24,296.10 58.78,295.30 65.32,295.30 71.86,297.70 78.40,314.40 84.94,297.70 91.48,266.60 98.02,274.00 104.56,270.50 111.10,271.50 117.64,270.50 124.18,281.50 130.72,293.20 137.26,288.70 143.80,274.50 150.34,280.30 156.88,258.40 163.42,259.70 169.96,275.00 176.50,280.30 183.04,262.90 189.58,261.60 196.12,265.30 202.66,266.70 209.20,270.20 215.74,268.10 222.28,275.00 228.82,257.30 235.36,266.10 241.90,280.60 248.44,283.90 254.98,291.90 261.52,276.60 268.06,274.20 274.60,271.00 281.14,277.40 287.68,285.50 294.22,292.50 300.76,301.00 307.30,302.60 313.84,317.90 320.38,323.10 326.92,329.70 333.46,356.00 340.00,367.50 346.54,382.10 353.08,377.50 359.62,362.60 366.16,370.30 372.70,368.60 379.24,387.80 385.78,396.90 392.32,383.50" fill="none" stroke="#3a3a86" stroke-width="1" stroke-linejoin="miter"/><polyline points="13.00,324.50 19.54,343.00 26.08,333.40 32.62,332.60 39.16,323.70 45.70,323.40 52.24,332.10 58.78,331.50 65.32,327.30 71.86,328.50 78.40,339.80 84.94,323.70 91.48,291.10 98.02,296.00 104.56,292.20 111.10,296.10 117.64,296.30 124.18,306.60 130.72,316.80 137.26,310.60 143.80,304.30 150.34,305.70 156.88,292.20 163.42,292.60 169.96,308.80 176.50,311.90 183.04,293.80 189.58,292.60 196.12,295.20 202.66,296.00 209.20,296.80 215.74,297.60 222.28,304.00 228.82,288.70 235.36,300.00 241.90,312.20 248.44,310.50 254.98,313.10 261.52,300.90 268.06,299.30 274.60,298.10 281.14,305.00 287.68,313.10 294.22,319.60 300.76,328.40 307.30,331.90 313.84,345.50 320.38,349.10 326.92,357.50 333.46,384.70 340.00,394.20 346.54,410.90 353.08,408.10 359.62,398.40 366.16,404.10 372.70,400.40 379.24,415.80 385.78,413.80 392.32,404.90" fill="none" stroke="#e24ee2" stroke-width="1" stroke-linejoin="miter"/><polyline points="13.00,333.40 19.54,345.50 26.08,340.20 32.62,341.80 39.16,334.20 45.70,337.40 52.24,348.70 58.78,351.10 65.32,345.50 71.86,348.70 78.40,358.40 84.94,346.00 91.48,307.30 98.02,314.80 104.56,307.00 111.10,310.80 117.64,313.50 124.18,321.10 130.72,329.20 137.26,324.80 143.80,321.10 150.34,323.90 156.88,311.40 163.42,314.60 169.96,326.00 176.50,329.20 183.04,314.90 189.58,314.00 196.12,313.20 202.66,313.80 209.20,313.50 215.74,313.70 222.28,318.60 228.82,306.50 235.36,316.30 241.90,327.10 248.44,323.90 254.98,323.90 261.52,313.40 268.06,315.50 274.60,312.30 281.14,318.70 287.68,326.30 294.22,333.60 300.76,344.50 307.30,348.00 313.84,359.90 320.38,360.60 326.92,368.10 333.46,397.70 340.00,406.00 346.54,419.20 353.08,414.10 359.62,402.40 366.16,409.00 372.70,404.10 379.24,415.80 385.78,431.50 392.32,428.10" fill="none" stroke="#bf4040" stroke-width="1" stroke-linejoin="miter"/></svg>
<div class="t n" style="right:363px;top:261.2px;font-size:11px;transform:scaleX(0.8)">3,100</div>
<div class="t n" style="right:363px;top:289.67px;font-size:11px;transform:scaleX(0.8)">3,000</div>
<div class="t n" style="right:363px;top:318.14px;font-size:11px;transform:scaleX(0.8)">2,900</div>
<div class="t n" style="right:363px;top:346.61px;font-size:11px;transform:scaleX(0.8)">2,800</div>
<div class="t n" style="right:363px;top:375.08px;font-size:11px;transform:scaleX(0.8)">2,700</div>
<div class="t n" style="right:363px;top:403.54999999999995px;font-size:11px;transform:scaleX(0.8)">2,600</div>
<div class="t n" style="right:363px;top:432.02px;font-size:11px;transform:scaleX(0.8)">2,500</div>
<div class="t" style="left:13.0px;top:450px;font-size:11.5px;transform:scaleX(0.88);transform-origin:0 50%">09</div>
<div class="t" style="left:78.4px;top:450px;font-size:11.5px;transform:scaleX(0.88);transform-origin:0 50%">10</div>
<div class="t" style="left:104.56px;top:450px;font-size:11.5px;transform:scaleX(0.88);transform-origin:0 50%">10/10</div>
<div class="t" style="left:143.8px;top:450px;font-size:11.5px;transform:scaleX(0.88);transform-origin:0 50%">10/18</div>
<div class="t" style="left:209.2px;top:450px;font-size:11.5px;transform:scaleX(0.88);transform-origin:0 50%">11</div>
<div class="t" style="left:235.36px;top:450px;font-size:11.5px;transform:scaleX(0.88);transform-origin:0 50%">11/07</div>
<div class="t" style="left:274.6px;top:450px;font-size:11.5px;transform:scaleX(0.88);transform-origin:0 50%">11/15</div>
<div class="t" style="left:346.54px;top:450px;font-size:11.5px;transform:scaleX(0.88);transform-origin:0 50%">12</div>
<div class="t" style="left:400.5px;top:450px;font-size:11.5px;transform:scaleX(0.88);transform-origin:0 50%">12/12</div>
<div class="t" style="left:7px;top:228.5px;font-size:11px;transform:scaleX(0.93);transform-origin:0 50%"><span style="color:#bf4040"><svg width="10" height="9" viewBox="0 0 10 9" style="display:inline-block;vertical-align:-1px;overflow:visible"><g fill="none" stroke="currentColor" stroke-width="1.0"><path d="M1 0.5H7.6V2.6M0 4.5H9M4.5 4.5V6M1 6.5H7.6V9"/></g></svg><svg width="10" height="9" viewBox="0 0 10 9" style="display:inline-block;vertical-align:-1px;overflow:visible"><g fill="none" stroke="currentColor" stroke-width="1.0"><path d="M1 0.5H7.6V4.5M4.5 4.5V8M0 8.5H9"/></g></svg>3Y</span> <span style="color:#e04ce0"><svg width="10" height="9" viewBox="0 0 10 9" style="display:inline-block;vertical-align:-1px;overflow:visible"><g fill="none" stroke="currentColor" stroke-width="1.0"><path d="M1 0.5H7.6V2.6M0 4.5H9M4.5 4.5V6M1 6.5H7.6V9"/></g></svg><svg width="10" height="9" viewBox="0 0 10 9" style="display:inline-block;vertical-align:-1px;overflow:visible"><g fill="none" stroke="currentColor" stroke-width="1.0"><path d="M1 0.5H7.6V4.5M4.5 4.5V8M0 8.5H9"/></g></svg>5Y</span> <span style="color:#3a3a86"><svg width="10" height="9" viewBox="0 0 10 9" style="display:inline-block;vertical-align:-1px;overflow:visible"><g fill="none" stroke="currentColor" stroke-width="1.0"><path d="M1 0.5H7.6V2.6M0 4.5H9M4.5 4.5V6M1 6.5H7.6V9"/></g></svg><svg width="10" height="9" viewBox="0 0 10 9" style="display:inline-block;vertical-align:-1px;overflow:visible"><g fill="none" stroke="currentColor" stroke-width="1.0"><path d="M1 0.5H7.6V4.5M4.5 4.5V8M0 8.5H9"/></g></svg>10Y</span></div>
<div class="a" style="left:450px;top:226px;width:348px;height:238px;background:#fff;border:1px solid #9aa3ad;border-left-color:#7d8690"></div>
<div class="a" style="left:451px;top:227px;width:346px;height:19px;background:#2a6bb5"></div>
<div class="a" style="left:451px;top:246px;width:69px;height:217px;background:#d9e5f1"></div>
<div class="a" style="left:520px;top:227px;width:1px;height:19px;background:#4c83c3"></div>
<div class="a" style="left:520px;top:246px;width:1px;height:217px;background:#c9d0d9"></div>
<div class="a" style="left:590px;top:227px;width:1px;height:19px;background:#4c83c3"></div>
<div class="a" style="left:590px;top:246px;width:1px;height:217px;background:#c9d0d9"></div>
<div class="a" style="left:659px;top:227px;width:1px;height:19px;background:#4c83c3"></div>
<div class="a" style="left:659px;top:246px;width:1px;height:217px;background:#c9d0d9"></div>
<div class="a" style="left:728px;top:227px;width:1px;height:19px;background:#4c83c3"></div>
<div class="a" style="left:728px;top:246px;width:1px;height:217px;background:#c9d0d9"></div>
<div class="a" style="left:451px;top:265px;width:346px;height:1px;background:#c9d0d9"></div>
<div class="a" style="left:451px;top:285px;width:346px;height:1px;background:#c9d0d9"></div>
<div class="a" style="left:451px;top:304px;width:346px;height:1px;background:#c9d0d9"></div>
<div class="a" style="left:451px;top:324px;width:346px;height:1px;background:#c9d0d9"></div>
<div class="a" style="left:451px;top:344px;width:346px;height:1px;background:#c9d0d9"></div>
<div class="a" style="left:451px;top:363px;width:346px;height:1px;background:#c9d0d9"></div>
<div class="a" style="left:451px;top:383px;width:346px;height:1px;background:#c9d0d9"></div>
<div class="a" style="left:451px;top:403px;width:346px;height:1px;background:#c9d0d9"></div>
<div class="a" style="left:451px;top:422px;width:346px;height:1px;background:#c9d0d9"></div>
<div class="a" style="left:451px;top:442px;width:346px;height:1px;background:#c9d0d9"></div>
<div class="h" style="left:445px;top:229.5px;width:69px"><svg width="10" height="9" viewBox="0 0 10 9" style="display:inline-block;vertical-align:-1px;overflow:visible"><g fill="none" stroke="currentColor" stroke-width="1.0"><path d="M1 0.5H7.6V2.6M0 4.5H9M4.5 4.5V6M1 6.5H7.6V9"/></g></svg><svg width="10" height="9" viewBox="0 0 10 9" style="display:inline-block;vertical-align:-1px;overflow:visible"><g fill="none" stroke="currentColor" stroke-width="1.0"><path d="M1 0.5H7.6V4.5M4.5 4.5V8M0 8.5H9"/></g></svg>10Y</div>
<div class="h" style="left:520px;top:229.5px;width:70px">11<svg width="10" height="9" viewBox="0 0 10 9" style="display:inline-block;vertical-align:-1px;overflow:visible"><g fill="none" stroke="currentColor" stroke-width="1.0"><path d="M3.1 0.8L0.3 8.5M3.1 2L6.1 7.6M8.1 0V9"/></g></svg>30<svg width="10" height="9" viewBox="0 0 10 9" style="display:inline-block;vertical-align:-1px;overflow:visible"><g fill="none" stroke="currentColor" stroke-width="1.0"><path d="M1.5 0V3.5H7.5V0M1.5 1.5H7.5M0 4.5H9M4.5 4.5V6M1.5 6V8.5H8.2"/></g></svg></div>
<div class="h" style="left:590px;top:229.5px;width:69px">16<svg width="10" height="9" viewBox="0 0 10 9" style="display:inline-block;vertical-align:-1px;overflow:visible"><g fill="none" stroke="currentColor" stroke-width="1.0"><path d="M3.1 0.8L0.3 8.5M3.1 2L6.1 7.6M8.1 0V9"/></g></svg>00<svg width="10" height="9" viewBox="0 0 10 9" style="display:inline-block;vertical-align:-1px;overflow:visible"><g fill="none" stroke="currentColor" stroke-width="1.0"><path d="M1.5 0V3.5H7.5V0M1.5 1.5H7.5M0 4.5H9M4.5 4.5V6M1.5 6V8.5H8.2"/></g></svg></div>
<div class="h" style="left:659px;top:229.5px;width:69px"><svg width="10" height="9" viewBox="0 0 10 9" style="display:inline-block;vertical-align:-1px;overflow:visible"><g fill="none" stroke="currentColor" stroke-width="1.0"><path d="M0.5 0.5H5.1M2.8 0.5L0.5 5M2.8 1.2L5.3 4.8M7.6 0V5.5M5.7 2.5H7.6M1.5 6V8.5H8.2"/></g></svg><svg width="10" height="9" viewBox="0 0 10 9" style="display:inline-block;vertical-align:-1px;overflow:visible"><g fill="none" stroke="currentColor" stroke-width="1.0"><path d="M0.5 1.5H5.6V3.6L1.2 8.2M8.1 0V9"/></g></svg></div>
<div class="h" style="left:728px;top:229.5px;width:69px"><svg width="10" height="9" viewBox="0 0 10 9" style="display:inline-block;vertical-align:-1px;overflow:visible"><g fill="none" stroke="currentColor" stroke-width="1.0"><path d="M0.5 0.5H5.1M2.8 0.5L0.5 5M2.8 1.2L5.3 4.8M7.6 0V5.5M5.7 2.5H7.6M1.5 6V8.5H8.2"/></g></svg><svg width="10" height="9" viewBox="0 0 10 9" style="display:inline-block;vertical-align:-1px;overflow:visible"><g fill="none" stroke="currentColor" stroke-width="1.0"><path d="M0.5 1.5H5.6V3.6L1.2 8.2M8.1 0V9"/></g></svg><svg width="10" height="9" viewBox="0 0 10 9" style="display:inline-block;vertical-align:-1px;overflow:visible"><g fill="none" stroke="currentColor" stroke-width="1.0"><path d="M5.1 1.5H0.9V7.5H5.4M6.6 0V9M6.6 4.5H8.4M8.4 0V9"/></g></svg><svg width="10" height="9" viewBox="0 0 10 9" style="display:inline-block;vertical-align:-1px;overflow:visible"><g fill="none" stroke="currentColor" stroke-width="1.0"><path d="M0.9 1V7.5H5.6V1M0.9 4.5H5.6M8.1 0V9"/></g></svg></div>
<svg class="a" style="left:515px;top:241px" width="4" height="4"><path d="M4 0 L4 4 L0 4 Z" fill="#e8f0fa"/></svg>
<div class="t d" style="left:451px;top:250.0px;width:69px;text-align:center">24/12/11</div>
<div class="t n" style="right:216.5px;top:249.5px;color:#202020">2,675</div>
<div class="t n" style="right:147.5px;top:249.5px;color:#202020">2,692</div>
<div class="t n" style="right:78.5px;top:249.5px;color:#202020">2,645</div>
<div class="t n" style="right:7px;top:249.5px;color:#d42020">0,047</div>
<div class="t d" style="left:451px;top:269.5px;width:69px;text-align:center">24/12/10</div>
<div class="t n" style="right:216.5px;top:269.0px;color:#202020">2,641</div>
<div class="t n" style="right:147.5px;top:269.0px;color:#202020">2,645</div>
<div class="t n" style="right:78.5px;top:269.0px;color:#202020">2,677</div>
<div class="t n" style="right:7px;top:269.0px;color:#2c34a8">&#8211;0,032</div>
<div class="t d" style="left:451px;top:289.0px;width:69px;text-align:center">24/12/09</div>
<div class="t n" style="right:216.5px;top:288.5px;color:#202020">2,739</div>
<div class="t n" style="right:147.5px;top:288.5px;color:#202020">2,677</div>
<div class="t n" style="right:78.5px;top:288.5px;color:#202020">2,744</div>
<div class="t n" style="right:7px;top:288.5px;color:#2c34a8">&#8211;0,067</div>
<div class="t d" style="left:451px;top:308.5px;width:69px;text-align:center">24/12/06</div>
<div class="t n" style="right:216.5px;top:308.0px;color:#202020">2,740</div>
<div class="t n" style="right:147.5px;top:308.0px;color:#202020">2,744</div>
<div class="t n" style="right:78.5px;top:308.0px;color:#202020">2,738</div>
<div class="t n" style="right:7px;top:308.0px;color:#d42020">0,006</div>
<div class="t d" style="left:451px;top:328.5px;width:69px;text-align:center">24/12/05</div>
<div class="t n" style="right:216.5px;top:328.0px;color:#202020">2,774</div>
<div class="t n" style="right:147.5px;top:328.0px;color:#202020">2,738</div>
<div class="t n" style="right:78.5px;top:328.0px;color:#202020">2,765</div>
<div class="t n" style="right:7px;top:328.0px;color:#2c34a8">&#8211;0,027</div>
<div class="t d" style="left:451px;top:348.0px;width:69px;text-align:center">24/12/04</div>
<div class="t n" style="right:216.5px;top:347.5px;color:#202020">2,736</div>
<div class="t n" style="right:147.5px;top:347.5px;color:#202020">2,765</div>
<div class="t n" style="right:78.5px;top:347.5px;color:#202020">2,713</div>
<div class="t n" style="right:7px;top:347.5px;color:#d42020">0,052</div>
<div class="t d" style="left:451px;top:367.5px;width:69px;text-align:center">24/12/03</div>
<div class="t n" style="right:216.5px;top:367.0px;color:#202020">2,670</div>
<div class="t n" style="right:147.5px;top:367.0px;color:#202020">2,713</div>
<div class="t n" style="right:78.5px;top:367.0px;color:#202020">2,697</div>
<div class="t n" style="right:7px;top:367.0px;color:#d42020">0,016</div>
<div class="t d" style="left:451px;top:387.5px;width:69px;text-align:center">24/12/02</div>
<div class="t n" style="right:216.5px;top:387.0px;color:#202020">2,718</div>
<div class="t n" style="right:147.5px;top:387.0px;color:#202020">2,697</div>
<div class="t n" style="right:78.5px;top:387.0px;color:#202020">2,751</div>
<div class="t n" style="right:7px;top:387.0px;color:#2c34a8">&#8211;0,054</div>
<div class="t d" style="left:451px;top:407.0px;width:69px;text-align:center">24/11/29</div>
<div class="t n" style="right:216.5px;top:406.5px;color:#202020">2,749</div>
<div class="t n" style="right:147.5px;top:406.5px;color:#202020">2,751</div>
<div class="t n" style="right:78.5px;top:406.5px;color:#202020">2,788</div>
<div class="t n" style="right:7px;top:406.5px;color:#2c34a8">&#8211;0,037</div>
<div class="t d" style="left:451px;top:426.5px;width:69px;text-align:center">24/11/28</div>
<div class="t n" style="right:216.5px;top:426.0px;color:#202020">2,820</div>
<div class="t n" style="right:147.5px;top:426.0px;color:#202020">2,788</div>
<div class="t n" style="right:78.5px;top:426.0px;color:#202020">2,880</div>
<div class="t n" style="right:7px;top:426.0px;color:#2c34a8">&#8211;0,092</div>
<div class="t d" style="left:451px;top:447.0px;width:69px;text-align:center">24/11/27</div>
<div class="t n" style="right:216.5px;top:446.5px;color:#202020">2,883</div>
<div class="t n" style="right:147.5px;top:446.5px;color:#202020">2,880</div>
<div class="t n" style="right:78.5px;top:446.5px;color:#202020">2,903</div>
<div class="t n" style="right:7px;top:446.5px;color:#2c34a8">&#8211;0,023</div>
<div class="a" style="left:798px;top:0;width:2px;height:465px;background:#eceef1"></div>
</body></html>
